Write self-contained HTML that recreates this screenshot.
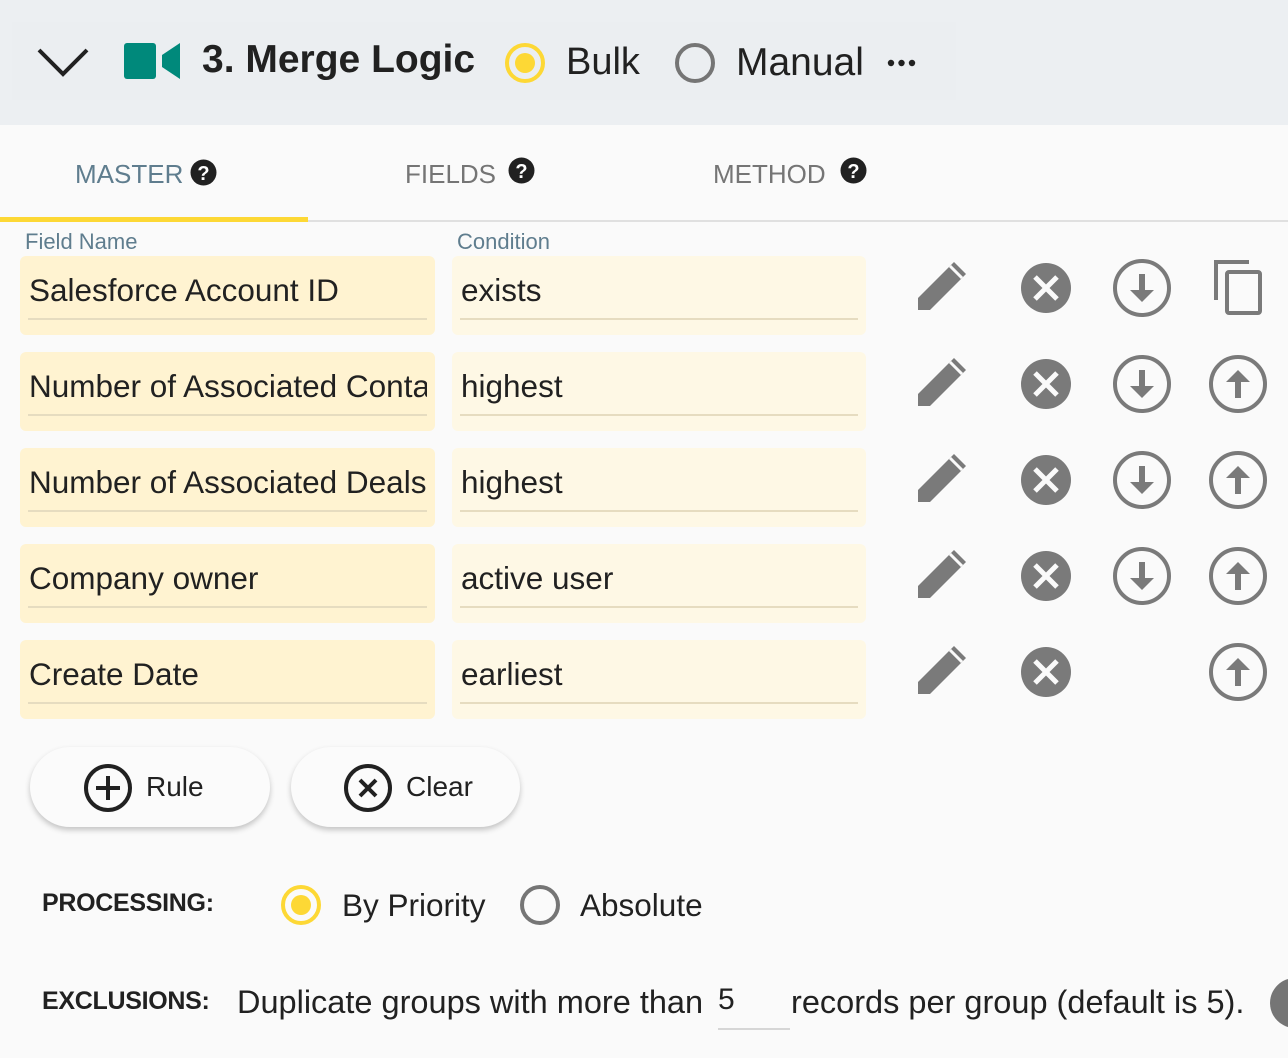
<!DOCTYPE html>
<html><head><style>
*{margin:0;padding:0;box-sizing:border-box}
body{width:1288px;height:1058px;background:#fafafa;font-family:"Liberation Sans",Roboto,sans-serif;position:relative;overflow:hidden;color:#212121}
.abs{position:absolute}
.hdr{left:0;top:0;width:1288px;height:125px;background:#eceff2}
.box{position:absolute;height:79px;border-radius:6px}
.f{left:20px;width:415px;background:#fff3d1}
.c{left:452px;width:414px;background:#fef8e5}
.box span{position:absolute;left:9px;top:16px;font-size:31.5px;white-space:nowrap;overflow:hidden;right:8px}
.box i{position:absolute;left:8px;right:8px;top:62px;height:2px;background:#e6dcc0}
.ic{position:absolute}
.btn{position:absolute;top:747px;height:80px;border-radius:40px;background:#fbfbfb;box-shadow:0 3px 6px rgba(0,0,0,.22)}
</style></head><body>
<div class="abs hdr"></div>
<div class="abs" style="left:12px;top:22px;width:944px;height:78px;background:#ebeef1"></div>
<svg class="ic" style="left:36px;top:46px" width="54" height="32"><path d="M3 4 L27 28 L51 4" fill="none" stroke="#212121" stroke-width="4"/></svg>
<svg class="ic" style="left:124px;top:43px" width="56" height="36"><rect x="0" y="0" width="32" height="36" rx="3" fill="#00897b"/><path d="M38 12 L56 0 V36 L38 24Z" fill="#00897b"/></svg>
<div class="abs" style="left:202px;top:38px;font-size:39px;font-weight:bold">3. Merge Logic</div>
<svg class="ic" style="left:504px;top:42px" width="42" height="42"><circle cx="21" cy="21" r="18" fill="none" stroke="#fdd835" stroke-width="4"/><circle cx="21" cy="21" r="10" fill="#fdd835"/></svg>
<div class="abs" style="left:566px;top:41px;font-size:38px">Bulk</div>
<svg class="ic" style="left:674px;top:42px" width="42" height="42"><circle cx="21" cy="21" r="18" fill="none" stroke="#757575" stroke-width="4"/></svg>
<div class="abs" style="left:736px;top:41px;font-size:39px">Manual</div>
<svg class="ic" style="left:886px;top:58px" width="32" height="10"><circle cx="5" cy="5" r="3.2" fill="#212121"/><circle cx="15.5" cy="5" r="3.2" fill="#212121"/><circle cx="26" cy="5" r="3.2" fill="#212121"/></svg>

<div class="abs" style="left:0;top:220px;width:1288px;height:2px;background:#e0e0e0"></div>
<div class="abs" style="left:0;top:217px;width:308px;height:5px;background:#fdd835"></div>
<div class="abs" style="left:75px;top:159px;font-size:26px;color:#5f7d8e">MASTER</div>
<div class="abs" style="left:405px;top:159px;font-size:26px;color:#757575">FIELDS</div>
<div class="abs" style="left:713px;top:159px;font-size:26px;color:#757575">METHOD</div>
<svg class="ic" style="left:190px;top:159px" width="27" height="27"><circle cx="13.5" cy="13.5" r="13" fill="#212121"/><text x="13.5" y="21" text-anchor="middle" font-size="20" font-weight="bold" fill="#fff" font-family="Liberation Sans">?</text></svg>
<svg class="ic" style="left:508px;top:157px" width="27" height="27"><circle cx="13.5" cy="13.5" r="13" fill="#212121"/><text x="13.5" y="21" text-anchor="middle" font-size="20" font-weight="bold" fill="#fff" font-family="Liberation Sans">?</text></svg>
<svg class="ic" style="left:840px;top:157px" width="27" height="27"><circle cx="13.5" cy="13.5" r="13" fill="#212121"/><text x="13.5" y="21" text-anchor="middle" font-size="20" font-weight="bold" fill="#fff" font-family="Liberation Sans">?</text></svg>

<div class="abs" style="left:25px;top:229px;font-size:22px;color:#5f7d8e">Field Name</div>
<div class="abs" style="left:457px;top:229px;font-size:22px;color:#5f7d8e">Condition</div>

<div class="box f" style="top:256px"><span>Salesforce Account ID</span><i></i></div>
<div class="box c" style="top:256px"><span>exists</span><i></i></div>
<div class="box f" style="top:352px"><span>Number of Associated Contacts</span><i></i></div>
<div class="box c" style="top:352px"><span>highest</span><i></i></div>
<div class="box f" style="top:448px"><span>Number of Associated Deals</span><i></i></div>
<div class="box c" style="top:448px"><span>highest</span><i></i></div>
<div class="box f" style="top:544px"><span>Company owner</span><i></i></div>
<div class="box c" style="top:544px"><span>active user</span><i></i></div>
<div class="box f" style="top:640px"><span>Create Date</span><i></i></div>
<div class="box c" style="top:640px"><span>earliest</span><i></i></div>

<svg class="ic" style="left:0;top:0" width="1288" height="740">
<defs>
<g id="pen"><path d="M-24 22 L-24 10 L12 -26 L24 -14 L-12 22 Z" fill="#7a7a7a"/><path d="M8 -22 L20 -10" stroke="#fafafa" stroke-width="3"/></g>
<g id="del"><circle r="25" fill="#7a7a7a"/><path d="M-11 -11 L11 11 M11 -11 L-11 11" stroke="#fafafa" stroke-width="5"/></g>
<g id="dn"><circle r="27" fill="none" stroke="#7a7a7a" stroke-width="4"/><path d="M-3 -14 H3 V2 H12 L0 14 L-12 2 H-3Z" fill="#7a7a7a"/></g>
<g id="up"><circle r="27" fill="none" stroke="#7a7a7a" stroke-width="4"/><path d="M-3 14 H3 V-2 H12 L0 -14 L-12 -2 H-3Z" fill="#7a7a7a"/></g>
</defs>
<use href="#pen" x="942" y="288"/><use href="#del" x="1046" y="288"/><use href="#dn" x="1142" y="288"/>
<path d="M1216 300 V262 H1249" fill="none" stroke="#7a7a7a" stroke-width="4"/><rect x="1227" y="272" width="33" height="41" rx="2" fill="none" stroke="#7a7a7a" stroke-width="4"/>
<use href="#pen" x="942" y="384"/><use href="#del" x="1046" y="384"/><use href="#dn" x="1142" y="384"/><use href="#up" x="1238" y="384"/>
<use href="#pen" x="942" y="480"/><use href="#del" x="1046" y="480"/><use href="#dn" x="1142" y="480"/><use href="#up" x="1238" y="480"/>
<use href="#pen" x="942" y="576"/><use href="#del" x="1046" y="576"/><use href="#dn" x="1142" y="576"/><use href="#up" x="1238" y="576"/>
<use href="#pen" x="942" y="672"/><use href="#del" x="1046" y="672"/><use href="#up" x="1238" y="672"/>
</svg>

<div class="btn" style="left:30px;width:240px"></div>
<div class="btn" style="left:291px;width:229px"></div>
<svg class="ic" style="left:82px;top:764px" width="52" height="52"><circle cx="26" cy="24" r="22" fill="none" stroke="#212121" stroke-width="4"/><path d="M26 12 V36 M14 24 H38" stroke="#212121" stroke-width="4"/></svg>
<div class="abs" style="left:146px;top:771px;font-size:28px">Rule</div>
<svg class="ic" style="left:343px;top:764px" width="52" height="52"><circle cx="25" cy="24" r="22" fill="none" stroke="#212121" stroke-width="4"/><path d="M17 16 L33 32 M33 16 L17 32" stroke="#212121" stroke-width="4"/></svg>
<div class="abs" style="left:406px;top:771px;font-size:28px">Clear</div>

<div class="abs" style="left:42px;top:889px;font-size:25px;font-weight:bold;letter-spacing:-0.3px">PROCESSING:</div>
<svg class="ic" style="left:280px;top:884px" width="42" height="42"><circle cx="21" cy="21" r="18" fill="none" stroke="#fdd835" stroke-width="4"/><circle cx="21" cy="21" r="10" fill="#fdd835"/></svg>
<div class="abs" style="left:342px;top:887px;font-size:31.5px">By Priority</div>
<svg class="ic" style="left:519px;top:884px" width="42" height="42"><circle cx="21" cy="21" r="18" fill="none" stroke="#757575" stroke-width="4"/></svg>
<div class="abs" style="left:580px;top:887px;font-size:31.5px">Absolute</div>

<div class="abs" style="left:42px;top:987px;font-size:25px;font-weight:bold;letter-spacing:-0.3px">EXCLUSIONS:</div>
<div class="abs" style="left:237px;top:984px;font-size:32.5px">Duplicate groups with more than</div>
<div class="abs" style="left:718px;top:983px;font-size:30px">5</div>
<div class="abs" style="left:718px;top:1028px;width:72px;height:2px;background:#d6d6d6"></div>
<div class="abs" style="left:791px;top:984px;font-size:32.5px">records per group (default is 5).</div>
<div class="abs" style="left:1270px;top:978px;width:50px;height:50px;border-radius:25px;background:#757575"></div>
</body></html>
